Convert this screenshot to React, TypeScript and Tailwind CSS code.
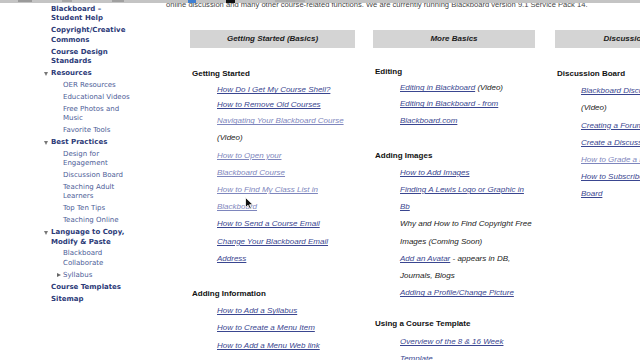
import React from 'react';

type NavItem = {
  lines: string[];
  bold?: boolean;
  open?: boolean;
  closed?: boolean;
};

const navItems: NavItem[] = [
  { lines: ['Blackboard –', 'Student Help'], bold: true },
  { lines: ['Copyright/Creative', 'Commons'], bold: true },
  { lines: ['Course Design', 'Standards'], bold: true },
  { lines: ['Resources'], bold: true, open: true },
  { lines: ['OER Resources'] },
  { lines: ['Educational Videos'] },
  { lines: ['Free Photos and', 'Music'] },
  { lines: ['Favorite Tools'] },
  { lines: ['Best Practices'], bold: true, open: true },
  { lines: ['Design for', 'Engagement'] },
  { lines: ['Discussion Board'] },
  { lines: ['Teaching Adult', 'Learners'] },
  { lines: ['Top Ten Tips'] },
  { lines: ['Teaching Online'] },
  { lines: ['Language to Copy,', 'Modify & Paste'], bold: true, open: true },
  { lines: ['Blackboard', 'Collaborate'] },
  { lines: ['Syllabus'], closed: true },
  { lines: ['Course Templates'], bold: true },
  { lines: ['Sitemap'], bold: true },
];

// kind: h = section heading, a = link, l = light (visited) link, t = plain text
type Line = { kind: 'h' | 'a' | 'l' | 't'; text: string; tail?: string; h?: string; mt?: string };

const col1: Line[] = [
  { kind: 'h', text: 'Getting Started' },
  { kind: 'a', text: 'How Do I Get My Course Shell?', h: 'leading-[15px]' },
  { kind: 'a', text: 'How to Remove Old Courses', h: 'leading-[15px]' },
  { kind: 'l', text: 'Navigating Your Blackboard Course' },
  { kind: 't', text: '(Video)' },
  { kind: 'l', text: 'How to Open your' },
  { kind: 'l', text: 'Blackboard Course' },
  { kind: 'l', text: 'How to Find My Class List in' },
  { kind: 'l', text: 'Blackboard' },
  { kind: 'a', text: 'How to Send a Course Email' },
  { kind: 'a', text: 'Change Your Blackboard Email' },
  { kind: 'a', text: 'Address' },
  { kind: 'h', text: 'Adding Information', mt: 'mt-[18px]' },
  { kind: 'a', text: 'How to Add a Syllabus' },
  { kind: 'a', text: 'How to Create a Menu Item' },
  { kind: 'a', text: 'How to Add a Menu Web link' },
  { kind: 'a', text: 'How to Hide a Menu Item' },
];

const col2: Line[] = [
  { kind: 'h', text: 'Editing' },
  { kind: 'a', text: 'Editing in Blackboard', tail: ' (Video)', h: 'leading-[15px]' },
  { kind: 'a', text: 'Editing in Blackboard - from' },
  { kind: 'a', text: 'Blackboard.com' },
  { kind: 'h', text: 'Adding Images', mt: 'mt-[17px]' },
  { kind: 'a', text: 'How to Add Images' },
  { kind: 'a', text: 'Finding A Lewis Logo or Graphic in' },
  { kind: 'a', text: 'Bb' },
  { kind: 't', text: 'Why and How to Find Copyright Free' },
  { kind: 't', text: 'Images (Coming Soon)' },
  { kind: 'a', text: 'Add an Avatar', tail: ' - appears in DB,' },
  { kind: 't', text: 'Journals, Blogs' },
  { kind: 'a', text: 'Adding a Profile/Change Picture' },
  { kind: 'h', text: 'Using a Course Template', mt: 'mt-[14px]' },
  { kind: 'a', text: 'Overview of the 8 & 16 Week' },
  { kind: 'a', text: 'Template' },
];

const col3: Line[] = [
  { kind: 'h', text: 'Discussion Board' },
  { kind: 'a', text: 'Blackboard Discussion Board' },
  { kind: 't', text: '(Video)' },
  { kind: 'a', text: 'Creating a Forum' },
  { kind: 'a', text: 'Create a Discussion Thread' },
  { kind: 'l', text: 'How to Grade a Discussion' },
  { kind: 'a', text: 'How to Subscribe to a Discussion' },
  { kind: 'a', text: 'Board' },
];

function Column({ title, lines, width, top, linkPad }: { title: string; lines: Line[]; width: string; top: string; linkPad: string }) {
  return (
    <div className={`${width} shrink-0`}>
      <div className="h-[18px] bg-[#d4d4d4] text-center text-[8px] leading-[18px] font-bold italic text-[#1c1c1c] whitespace-nowrap">
        {title}
      </div>
      <div className={top}>
        {lines.map((ln, i) => {
          const lh = ln.h ?? 'leading-[17.2px]';
          if (ln.kind === 'h') {
            return (
              <div key={i} className={`${lh} ${ln.mt ?? ''} pl-[2px] text-[8px] font-bold text-[#111] whitespace-nowrap`}>
                {ln.text}
              </div>
            );
          }
          return (
            <div key={i} className={`${lh} ${linkPad} text-[8px] italic whitespace-nowrap`}>
              {ln.kind === 't' ? (
                <span className="text-[#222]">{ln.text}</span>
              ) : (
                <span className={`underline ${ln.kind === 'l' ? 'text-[#7e86bd]' : 'text-[#3a4690]'}`}>{ln.text}</span>
              )}
              {ln.tail && <span className="text-[#222]">{ln.tail}</span>}
            </div>
          );
        })}
      </div>
    </div>
  );
}

export default function App() {
  return (
    <div className="relative w-[640px] h-[360px] overflow-hidden bg-white">
      <div className="flex">
        {/* Sidebar */}
        <nav className="w-[166px] shrink-0 pt-[5px] pl-[51px] font-['DejaVu_Sans',sans-serif] text-[7px]">
          {navItems.map((item, i) => {
            const indent = item.bold ? '' : 'pl-[12px]';
            return (
              <div key={i} className={`relative mb-[2.5px] leading-[9.4px] ${indent} ${item.bold ? 'font-bold text-[#2c3a78]' : 'text-[#4d5d97]'}`}>
                {item.open && (
                  <span className="absolute left-[-7px] top-[3px] w-0 h-0 border-l-[2.5px] border-r-[2.5px] border-t-[4px] border-l-transparent border-r-transparent border-t-[#777]" />
                )}
                {item.closed && (
                  <span className="absolute left-[6px] top-[2.5px] w-0 h-0 border-t-[2.5px] border-b-[2.5px] border-l-[4px] border-t-transparent border-b-transparent border-l-[#666]" />
                )}
                {item.lines.map((l, j) => (
                  <div key={j} className="whitespace-nowrap">{l}</div>
                ))}
              </div>
            );
          })}
        </nav>

        {/* Main content */}
        <main className="flex-1 min-w-0 font-['Liberation_Sans',Arial,sans-serif]">
          <p className="text-[7.6px] leading-[10px] text-[#444] whitespace-nowrap">
            online discussion and many other course-related functions. We are currently running Blackboard version 9.1 Service Pack 14.
          </p>
          <div className="mt-[20px] ml-[24px] flex">
            <Column title="Getting Started (Basics)" lines={col1} width="w-[165px]" top="mt-[17px]" linkPad="pl-[27px]" />
            <div className="w-[18px] shrink-0" />
            <Column title="More Basics" lines={col2} width="w-[162px]" top="mt-[15px]" linkPad="pl-[27px]" />
            <div className="w-[20px] shrink-0" />
            <Column title="Discussion Board" lines={col3} width="w-[165px]" top="mt-[17px]" linkPad="pl-[26px]" />
          </div>
        </main>
      </div>

      {/* browser toolbar edge peeking in at the top */}
      <div className="absolute left-0 top-0 w-full h-[3px] bg-[#c4c4c4] flex items-start">
        <div className="ml-[18px] w-[14px] h-[2px] bg-[#9a9a9a]" />
        <div className="ml-[30px] w-[10px] h-[2px] bg-[#a5a5a5]" />
        <div className="ml-[40px] w-[12px] h-[2px] bg-[#a0a0a0]" />
        <div className="ml-[64px] w-[8px] h-[3px] bg-[#3f7fd0]" />
        <div className="ml-[30px] w-[9px] h-[3px] bg-[#111]" />
        <div className="ml-[40px] w-[30px] h-[2px] bg-[#b0b0b0]" />
      </div>

      {/* mouse pointer */}
      <svg className="absolute left-[245px] top-[197px]" width="9" height="13" viewBox="0 0 9 13">
        <path d="M0.5 0.5 L0.5 10.5 L3 8.2 L4.8 12 L6.3 11.3 L4.6 7.7 L8 7.7 Z" fill="#111" stroke="#fff" strokeWidth="0.8" />
      </svg>
    </div>
  );
}
